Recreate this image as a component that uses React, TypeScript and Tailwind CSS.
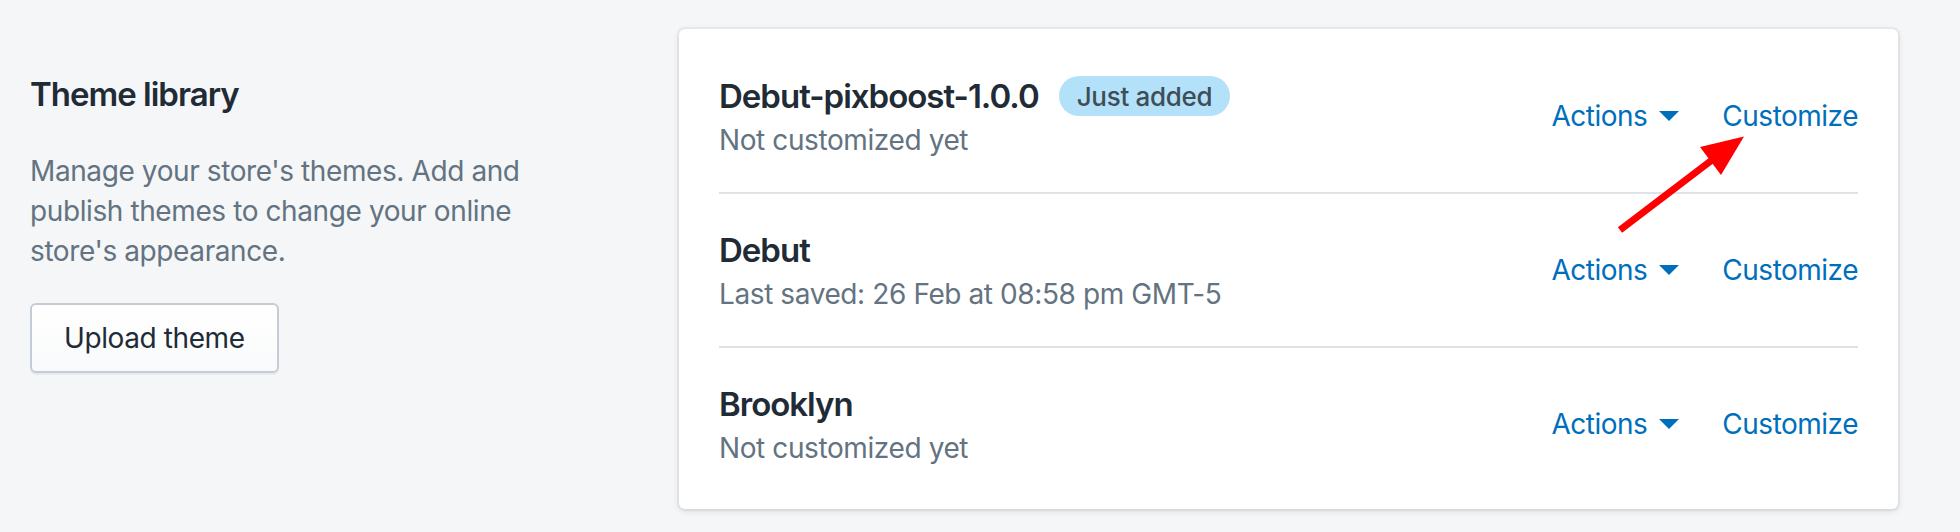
import React from "react";

const rows = [
  { title: "Debut-pixboost-1.0.0", sub: "Not customized yet", badge: "Just added" },
  { title: "Debut", sub: "Last saved: 26 Feb at 08:58 pm GMT-5" },
  { title: "Brooklyn", sub: "Not customized yet" },
];

function Caret() {
  return (
    <svg width="20" height="10" viewBox="0 0 20 10" className="ml-3 block">
      <path d="M0 0 L20 0 L10 10 Z" fill="#006fbb" />
    </svg>
  );
}

export default function App() {
  return (
    <div
      className="relative flex min-h-[532px] w-[1960px] bg-[#f4f6f8] text-[#212b36]"
      style={{ fontFamily: "Inter, 'Noto Sans', sans-serif" }}
    >
      <div className="w-[679px] shrink-0 pl-[30px] pt-[70px]">
        <h2 className="text-[33px] font-semibold leading-[48px] tracking-[-1px]">Theme library</h2>
        <p className="mt-[33px] w-[530px] text-[28px] leading-[40px] tracking-[-0.4px] text-[#637381]">
          Manage your store's themes. Add and publish themes to change your online store's appearance.
        </p>
        <button className="mt-8 flex h-[70px] items-center rounded-[6px] border-2 border-[#c4cdd5] bg-gradient-to-b from-white to-[#f9fafb] px-8 text-[28px] leading-[40px] tracking-[-0.4px] text-[#212b36] shadow-[0_2px_0_0_rgba(22,29,37,0.05)]">
          Upload theme
        </button>
      </div>
      <div className="mt-[29px] mb-[23px] w-[1219px] shrink-0 rounded-[6px] bg-white pt-[11px] pb-[9px] shadow-[0_0_0_2px_rgba(63,63,68,0.05),0_2px_6px_0_rgba(63,63,68,0.15)]">
        {rows.map((r, i) => (
          <div key={r.title} className="px-10">
            <div
              className={
                "flex items-center justify-between py-8 " +
                (i > 0 ? "border-t-2 border-[#dfe3e8]" : "")
              }
            >
              <div>
                <div className="flex items-center">
                  <span className="text-[33px] font-semibold leading-[48px] tracking-[-1px]">{r.title}</span>
                  {r.badge && (
                    <span className="ml-5 flex h-[40px] items-center rounded-full bg-[#b4e1fa] px-[18px] text-[26px] font-medium tracking-[-0.3px] text-[#3e4e57]">
                      {r.badge}
                    </span>
                  )}
                </div>
                <div className="text-[28px] leading-[40px] tracking-[-0.4px] text-[#637381]">{r.sub}</div>
              </div>
              <div className="flex items-center text-[28px] leading-[40px] tracking-[-0.5px] text-[#006fbb]">
                <span>Actions</span>
                <Caret />
                <span className="ml-[43px]">Customize</span>
              </div>
            </div>
          </div>
        ))}
      </div>
      <svg
        className="pointer-events-none absolute left-0 top-0"
        width="1960"
        height="532"
        viewBox="0 0 1960 532"
      >
        <line x1="1620" y1="230" x2="1712" y2="160" stroke="#ff0000" strokeWidth="7" />
        <polygon points="1744,136.5 1700,147 1721,175" fill="#ff0000" />
      </svg>
    </div>
  );
}
